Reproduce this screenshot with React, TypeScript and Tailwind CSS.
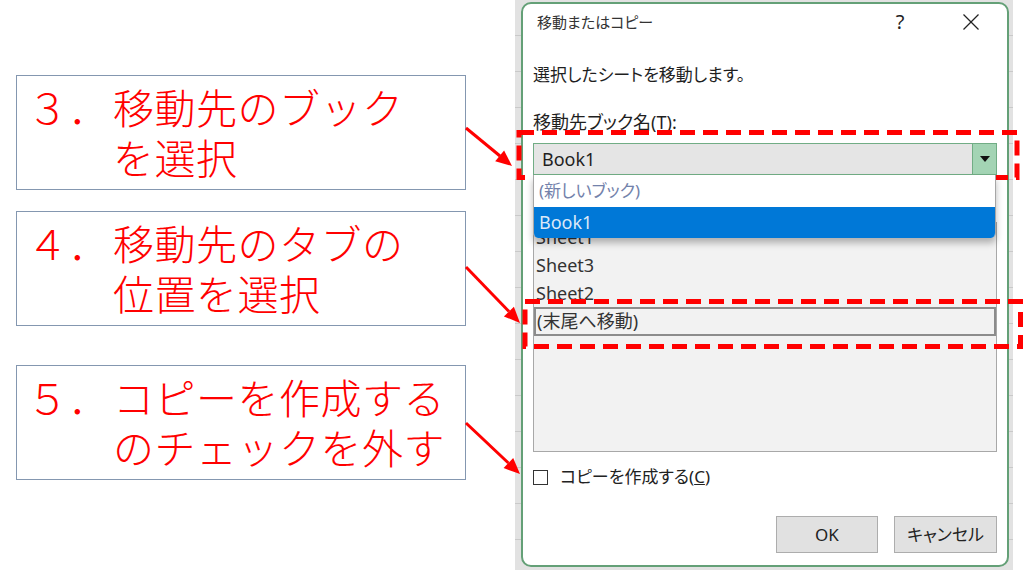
import React from "react";

const cjk = "font-['Noto_Sans_CJK_JP',sans-serif]";
const ui = "font-['Noto_Sans','Noto_Sans_CJK_JP',sans-serif] [font-feature-settings:'palt']";

function Note({ num, lines, className }: { num: string; lines: string[]; className?: string }) {
  return (
    <div
      className={`h-[115px] w-[450px] border border-[#8497b0] bg-white pl-[10px] pt-[5px] text-[41px] font-light leading-[50px] tracking-[0.5px] text-[#ff0000] ${cjk} ${className ?? ""}`}
    >
      <div className="flex">
        <span className="w-[86px] shrink-0">{num}</span>
        <div className="whitespace-nowrap">
          {lines.map((l) => (
            <div key={l}>{l}</div>
          ))}
        </div>
      </div>
    </div>
  );
}

function Arrows() {
  return (
    <svg className="pointer-events-none absolute inset-0" width={1024} height={570}>
      <g stroke="#ff0000" strokeWidth={3}>
        <line x1={466} y1={128} x2={500} y2={156} />
        <line x1={466} y1={267} x2={509} y2={311.5} />
        <line x1={466} y1={423} x2={508.4} y2={463} />
      </g>
      <g fill="#ff0000">
        <polygon points="512,166 495.2,161.2 504.1,150.4" />
        <polygon points="520,323 503.9,316.4 513.9,306.7" />
        <polygon points="520,474 503.6,468.1 513.2,457.9" />
      </g>
      <g fill="none" stroke="#ff0000" strokeWidth={5} strokeDasharray="15 8">
        <rect x={519} y={132.5} width={498} height={45} />
        <rect x={525} y={301.5} width={495.5} height={45} />
      </g>
    </svg>
  );
}

function Dialog() {
  const rows = ["Sheet1", "Sheet3", "Sheet2"];
  return (
    <div
      className={`flex h-[565px] w-[488px] flex-col rounded-[10px] border-2 border-[#64a077] bg-white text-[#1f1f1f] ${ui}`}
    >
      {/* title bar */}
      <div className="flex h-[36px] shrink-0 items-center pl-[14px] pr-[16px]">
        <span className="flex-1 text-[15px] text-[#333]">移動またはコピー</span>
        <span className="w-[40px] text-center text-[20px] text-[#222]">?</span>
        <span className="ml-[31px] flex w-[40px] justify-center">
          <svg width="18" height="18" viewBox="0 0 18 18" stroke="#222" strokeWidth="1.3">
            <line x1="1.5" y1="1.5" x2="16.5" y2="16.5" />
            <line x1="16.5" y1="1.5" x2="1.5" y2="16.5" />
          </svg>
        </span>
      </div>

      <div className="flex flex-1 flex-col px-[10px]">
        <div className="mt-[23px] h-[24px] text-[17px] leading-[24px]">選択したシートを移動します。</div>
        <div className="mt-[23px] h-[24px] text-[18px] leading-[24px]">移動先ブック名(T):</div>

        <div className="relative mt-[9px]">
          <div className="flex h-[32px] items-stretch border border-[#71ad85] bg-[#e5e5e5]">
            <span className="flex flex-1 items-center pl-[8px] text-[18px]">Book1</span>
            <span className="flex w-[24px] items-center justify-center border-l border-[#71ad85] bg-[#a3d4b4]">
              <svg width="10" height="6" viewBox="0 0 10 6">
                <polygon points="0,0 10,0 5,6" fill="#111" />
              </svg>
            </span>
          </div>
          {/* open dropdown */}
          <div className="absolute left-0 right-[1px] top-full z-10 overflow-hidden rounded-b-[5px] border-x border-[#a6a6a6] bg-white shadow-[0_5px_7px_rgba(0,0,0,0.28)]">
            <div className="flex h-[32px] items-center pl-[5px] text-[17px] text-[#7382ab]">(新しいブック)</div>
            <div className="flex h-[31px] items-center bg-[#0078d7] pl-[5px] text-[18px] text-[#dce9f8]">Book1</div>
          </div>
        </div>

        <div className="mt-[14px] h-[24px] text-[17px] leading-[24px]">挿入先(B):</div>
        <div className="mt-[9px] h-[230px] border border-[#a8a8a8] bg-[#f2f2f2]">
          {rows.map((r) => (
            <div key={r} className="flex h-[28px] items-center pl-[2px] text-[18px] text-[#333]">
              {r}
            </div>
          ))}
          <div className="flex h-[29px] items-center border-2 border-[#8c8c8c] pl-[1px] text-[18px] text-[#333]">
            (末尾へ移動)
          </div>
        </div>

        <label className="mt-[15px] flex h-[20px] items-center">
          <span className="h-[15px] w-[15px] border border-[#333] bg-white" />
          <span className="ml-[12px] text-[17px] text-[#222]">
            コピーを作成する(<span className="underline">C</span>)
          </span>
        </label>

        <div className="mt-[29px] flex justify-end gap-[16px]">
          <button className="h-[37px] w-[102px] border border-[#adadad] bg-[#e1e1e1] text-[17px] text-[#222]">
            OK
          </button>
          <button className="h-[37px] w-[103px] border border-[#adadad] bg-[#e1e1e1] text-[17px] text-[#222]">
            キャンセル
          </button>
        </div>
      </div>
    </div>
  );
}

export default function App() {
  return (
    <div className="relative flex h-[570px] w-[1024px] overflow-hidden bg-white">
      <div className="flex w-[466px] shrink-0 flex-col pl-[16px] pt-[75px]">
        <Note num="３．" lines={["移動先のブック", "を選択"]} />
        <Note num="４．" lines={["移動先のタブの", "位置を選択"]} className="mt-[21px]" />
        <Note num="５．" lines={["コピーを作成する", "のチェックを外す"]} className="mt-[39px]" />
      </div>

      <div className="ml-[49px] h-[570px] w-[498px] shrink-0 bg-[repeating-linear-gradient(to_bottom,#e2e2e2_0px,#e2e2e2_35px,#c9c9c9_35px,#c9c9c9_36px)] pl-[6px] pt-[2px]">
        <Dialog />
      </div>

      <Arrows />
    </div>
  );
}
